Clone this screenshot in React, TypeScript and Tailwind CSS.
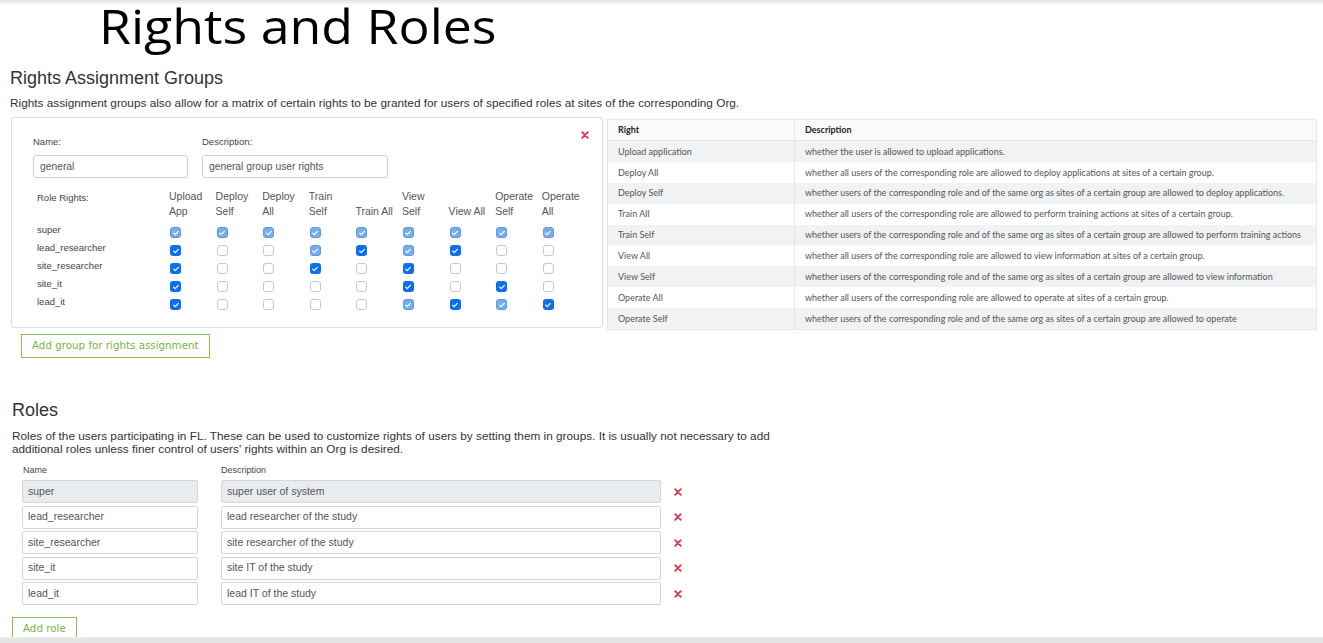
import React from "react";

const rightsTable = [
  ["Upload application", "whether the user is allowed to upload applications."],
  ["Deploy All", "whether all users of the corresponding role are allowed to deploy applications at sites of a certain group."],
  ["Deploy Self", "whether users of the corresponding role and of the same org as sites of a certain group are allowed to deploy applications."],
  ["Train All", "whether all users of the corresponding role are allowed to perform training actions at sites of a certain group."],
  ["Train Self", "whether users of the corresponding role and of the same org as sites of a certain group are allowed to perform training actions"],
  ["View All", "whether all users of the corresponding role are allowed to view information at sites of a certain group."],
  ["View Self", "whether users of the corresponding role and of the same org as sites of a certain group are allowed to view information"],
  ["Operate All", "whether all users of the corresponding role are allowed to operate at sites of a certain group."],
  ["Operate Self", "whether users of the corresponding role and of the same org as sites of a certain group are allowed to operate"],
];

const columns = [
  ["Upload", "App"],
  ["Deploy", "Self"],
  ["Deploy", "All"],
  ["Train", "Self"],
  ["", "Train All"],
  ["View", "Self"],
  ["", "View All"],
  ["Operate", "Self"],
  ["Operate", "All"],
];

// 0 = empty, 1 = checked, 2 = checked (inherited / disabled)
const matrix: [string, number[]][] = [
  ["super", [2, 2, 2, 2, 2, 2, 2, 2, 2]],
  ["lead_researcher", [1, 0, 0, 2, 1, 2, 1, 0, 0]],
  ["site_researcher", [1, 0, 0, 1, 0, 1, 0, 0, 0]],
  ["site_it", [1, 0, 0, 0, 0, 1, 0, 1, 0]],
  ["lead_it", [1, 0, 0, 0, 0, 2, 1, 2, 1]],
];

const roles = [
  ["super", "super user of system"],
  ["lead_researcher", "lead researcher of the study"],
  ["site_researcher", "site researcher of the study"],
  ["site_it", "site IT of the study"],
  ["lead_it", "lead IT of the study"],
];

const Check = ({ state }: { state: number }) => {
  if (state === 0) {
    return <span className="block w-[11px] h-[11px] rounded-[3px] border border-[#c4c8cc] bg-white" />;
  }
  return (
    <span
      className={
        "flex items-center justify-center w-[11px] h-[11px] rounded-[3px] " +
        (state === 1 ? "bg-[#0b6ff0]" : "bg-[#78acee] border border-[#5f98e0]")
      }
    >
      <svg viewBox="0 0 12 12" className="w-[8px] h-[8px]">
        <path d="M2.5 6.2l2.3 2.3 4.7-5" fill="none" stroke="white" strokeWidth="1.8" strokeLinecap="round" strokeLinejoin="round" />
      </svg>
    </span>
  );
};

const RedX = () => (
  <svg viewBox="0 0 10 10" className="w-[8px] h-[8px]">
    <path d="M1.5 1.5l7 7M8.5 1.5l-7 7" stroke="#dc3545" strokeWidth="2.2" strokeLinecap="round" />
  </svg>
);

const App = () => {
  return (
    <div className="relative bg-white w-[1323px] h-[643px] overflow-hidden flex flex-col text-[#333] font-['Liberation_Sans',Arial,sans-serif]">
      <div className="absolute left-0 right-0 top-0 h-[5px] bg-gradient-to-b from-[#e2e2e2] to-white" />
      <h1 className="ml-[99px] mt-[2px] h-[48px] text-[48px] leading-[48px] text-black font-['Open_Sans',sans-serif] origin-left scale-x-[1.08] whitespace-nowrap">
        Rights and Roles
      </h1>

      <section className="pl-[10px] mt-[18px]">
        <h2 className="text-[18px] leading-[20px] text-[#333]">Rights Assignment Groups</h2>
        <p className="text-[11.8px] leading-[14px] mt-[8px]">
          Rights assignment groups also allow for a matrix of certain rights to be granted for users of specified roles at sites of the corresponding Org.
        </p>

        <div className="flex mt-[7px] items-start">
          <div className="w-[592px] ml-[1px]">
            <div className="relative h-[211px] border border-[#dedede] rounded-[3px] pl-[21px] pt-[17px] shadow-[0_0_2px_rgba(0,0,0,0.05)]">
              <span className="absolute right-[13px] top-[13px]">
                <RedX />
              </span>
              <div className="flex gap-[14px] text-[9.5px] text-[#444]">
                <div className="w-[155px]">Name:</div>
                <div>Description:</div>
              </div>
              <div className="flex gap-[14px] mt-[6px]">
                <div className="w-[155px] h-[23px] border border-[#d0d0d0] rounded-[3px] px-[6px] flex items-center text-[10.3px] text-[#555]">
                  general
                </div>
                <div className="w-[186px] h-[23px] border border-[#d0d0d0] rounded-[3px] px-[6px] flex items-center text-[10.3px] text-[#555]">
                  general group user rights
                </div>
              </div>

              <div className="grid grid-cols-[132px_repeat(9,46.6px)] mt-[11px] pl-[4px]">
                <div className="text-[9.5px] text-[#444] pt-[2px]">Role Rights:</div>
                {columns.map(([a, b], i) => (
                  <div key={i} className="text-[10.5px] leading-[15px] text-[#555] h-[35px]">
                    <div className="h-[15px]">{a}</div>
                    <div>{b}</div>
                  </div>
                ))}
                {matrix.map(([name, states]) => (
                  <React.Fragment key={name}>
                    <div className="text-[9.5px] text-[#444] h-[18px] leading-[12px]">{name}</div>
                    {states.map((s, i) => (
                      <div key={i} className="h-[18px] pt-[3px] pl-[1px]">
                        <Check state={s} />
                      </div>
                    ))}
                  </React.Fragment>
                ))}
              </div>
            </div>
            <button className="ml-[10px] mt-[6px] h-[24px] px-[10px] border border-[#8cc152] text-[#7cb342] text-[10.3px] font-['DejaVu_Sans',sans-serif] bg-white">
              Add group for rights assignment
            </button>
          </div>

          <div className="ml-[4px] mt-[2px] w-[710px] border border-[#e8e8e8] shadow-[0_0_2px_rgba(0,0,0,0.06)] font-['Lato',sans-serif] text-[9px]">
            <div className="flex h-[21px] items-center bg-[#fafafa] font-bold text-[#222] border-b border-[#e6e6e6]">
              <div className="w-[187px] pl-[10px] h-full flex items-center border-r border-[#e6e6e6]">Right</div>
              <div className="pl-[10px]">Description</div>
            </div>
            {rightsTable.map(([r, d], i) => (
              <div
                key={r}
                className={"flex h-[20.9px] items-center text-[#555] " + (i % 2 === 0 ? "bg-[#f1f2f3]" : "bg-white")}
              >
                <div className="w-[187px] pl-[10px] h-full flex items-center border-r border-[#e6e6e6]">{r}</div>
                <div className="pl-[10px] whitespace-nowrap">{d}</div>
              </div>
            ))}
          </div>
        </div>
      </section>

      <section className="pl-[12px] mt-[42px]">
        <h2 className="text-[18px] leading-[20px]">Roles</h2>
        <p className="text-[11.8px] leading-[13px] mt-[10px] w-[780px]">
          Roles of the users participating in FL. These can be used to customize rights of users by setting them in groups. It is usually not necessary to add additional roles unless finer control of users' rights within an Org is desired.
        </p>
        <div className="pl-[10px] mt-[8px]">
          <div className="flex text-[9px] text-[#444] h-[13px]">
            <div className="w-[199px] pl-[1px]">Name</div>
            <div>Description</div>
          </div>
          <div className="flex flex-col gap-[2.5px] mt-[3px]">
            {roles.map(([n, d], i) => (
              <div key={n} className="flex items-center">
                <div
                  className={
                    "w-[176px] h-[23px] border border-[#d6d6d6] rounded-[2px] px-[5px] flex items-center text-[10.5px] text-[#555] " +
                    (i === 0 ? "bg-[#e9ecef]" : "bg-white")
                  }
                >
                  {n}
                </div>
                <div
                  className={
                    "ml-[23px] w-[440px] h-[23px] border border-[#d6d6d6] rounded-[2px] px-[5px] flex items-center text-[10.5px] text-[#555] " +
                    (i === 0 ? "bg-[#e9ecef]" : "bg-white")
                  }
                >
                  {d}
                </div>
                <span className="ml-[13px]">
                  <RedX />
                </span>
              </div>
            ))}
          </div>
        </div>
        <button className="mt-[12px] h-[24px] px-[10px] border border-[#8cc152] text-[#7cb342] text-[10.3px] font-['DejaVu_Sans',sans-serif] bg-white">
          Add role
        </button>
      </section>
      <div className="absolute left-0 right-0 top-[637px] h-[6px] bg-[#e3e3e3] border-t border-[#eeeeee]" />
    </div>
  );
};

export default App;
